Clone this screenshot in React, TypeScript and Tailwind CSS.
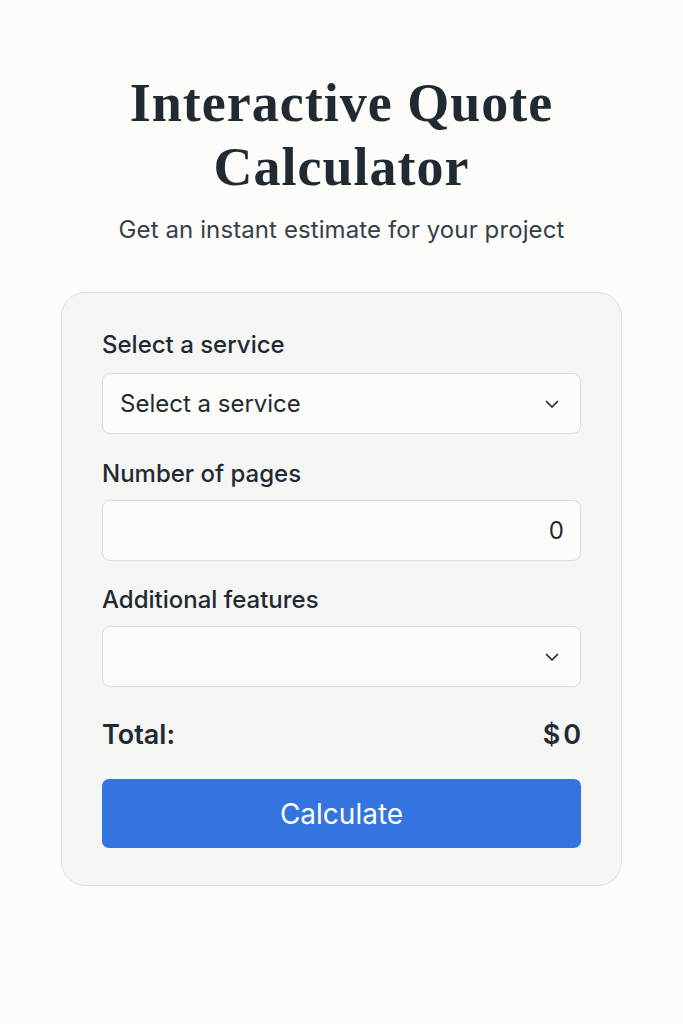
import React from "react";

function Chevron() {
  return (
    <svg width="16" height="16" viewBox="0 0 16 16" fill="none" className="shrink-0">
      <path d="M2.5 5.5l5.5 5.5 5.5-5.5" stroke="#1f2a33" strokeWidth="1.7" strokeLinecap="round" strokeLinejoin="round" />
    </svg>
  );
}

export default function App() {
  return (
    <div
      className="min-h-[1024px] w-full bg-[#fdfcf8] flex flex-col items-center"
      style={{ fontFamily: "Inter, 'Noto Sans', sans-serif" }}
    >
      <h1
        className="mt-[71px] text-center text-[54px] leading-[64px] font-bold text-[#1f2a33] w-[520px] tracking-[1px]"
        style={{ fontFamily: "'Liberation Serif', serif" }}
      >
        Interactive Quote Calculator
      </h1>
      <p className="mt-[16px] text-[24px] leading-[30px] text-[#34414c] tracking-[0.1px]">
        Get an instant estimate for your project
      </p>

      <div className="mt-[47px] w-[561px] rounded-[24px] border border-[#e0e0de] bg-[#f5f5f4] px-[40px] pt-[40px] pb-[37px] flex flex-col">
        <label className="text-[24px] leading-[24px] font-medium text-[#1f2a33]">Select a service</label>
        <div className="mt-[16px] h-[61px] rounded-[8px] border border-[#dcdcda] bg-[#fdfcf8] flex items-center justify-between pl-[17px] pr-[20px]">
          <span className="text-[24px] text-[#1f2a33]">Select a service</span>
          <Chevron />
        </div>

        <label className="mt-[28px] text-[24px] leading-[24px] font-medium text-[#1f2a33]">Number of pages</label>
        <div className="mt-[14px] h-[61px] rounded-[8px] border border-[#dcdcda] bg-[#fdfcf8] flex items-center justify-end pr-[16px]">
          <span className="text-[24px] text-[#1f2a33]">0</span>
        </div>

        <label className="mt-[27px] text-[24px] leading-[24px] font-medium text-[#1f2a33]">Additional features</label>
        <div className="mt-[14px] h-[61px] rounded-[8px] border border-[#dcdcda] bg-[#fdfcf8] flex items-center justify-end pr-[20px]">
          <Chevron />
        </div>

        <div className="mt-[32px] flex items-center justify-between h-[32px]">
          <span className="text-[27px] font-semibold text-[#1f2a33]">Total:</span>
          <span className="text-[27px] font-semibold text-[#1f2a33]">
            <span className="mr-[3px]">$</span>0
          </span>
        </div>

        <button className="mt-[28px] h-[69px] rounded-[7px] bg-[#3474e0] text-white text-[28px] font-normal">
          Calculate
        </button>
      </div>
    </div>
  );
}
